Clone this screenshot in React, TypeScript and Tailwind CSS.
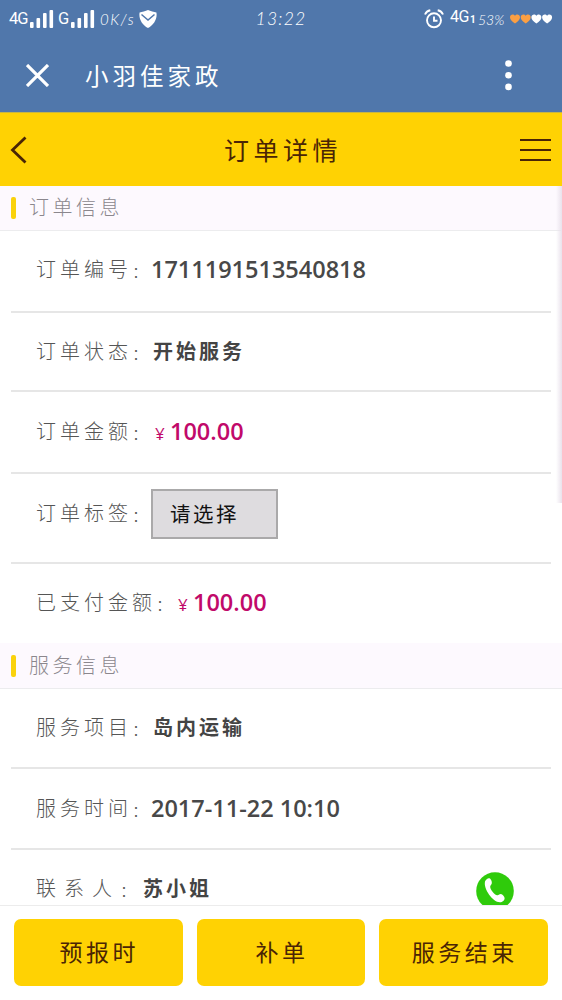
import type { ReactNode } from "react";
import { clsx } from "clsx";

const SIGNAL_BARS = [
  { x: 0, h: 6 },
  { x: 6.5, h: 10 },
  { x: 13, h: 15 },
  { x: 19.5, h: 18 },
];

const HEARTS = ["#fb9f43", "#fb9f43", "#ffffff", "#ffffff"];

const ACTIONS = ["预报时", "补单", "服务结束"];

function Signal() {
  return (
    <svg width="24" height="18" viewBox="0 0 24 18" fill="#fff" className="shrink-0">
      {SIGNAL_BARS.map((b) => (
        <rect key={b.x} x={b.x} y={18 - b.h} width="3.6" height={b.h} rx="1" />
      ))}
    </svg>
  );
}

function StatusBar() {
  return (
    <div className="grid h-[38px] grid-cols-3 text-white">
      <div className="flex items-center whitespace-nowrap pl-[9px] font-['Roboto',sans-serif] text-[16.5px]">
        <span className="w-[21px] tracking-[-1px]">4G</span>
        <Signal />
        <span className="ml-1 w-[13px]">G</span>
        <Signal />
        <span className="ml-[5px] w-[39px] font-['Lato',sans-serif] text-[15px] font-light italic tracking-[1.5px]">
          0K/s
        </span>
        <svg width="18" height="18" viewBox="0 0 18 18" className="shrink-0">
          <path d="M9 0C6.5 1.2 3 1.8.6 2.4-.6 8.5 3 15 9 18c6-3 9.6-9.5 8.4-15.6C15 1.8 11.5 1.2 9 0Z" fill="#fff" />
          <path d="m2.5 4.5 6.5 5.5 6.5-5.5" fill="none" stroke="#5077ab" strokeWidth="1.5" />
        </svg>
      </div>
      <div className="flex items-center justify-center font-['Lato',sans-serif] text-[17.5px] font-light italic tracking-[1.2px]">
        13:22
      </div>
      <div className="flex items-center justify-end whitespace-nowrap pr-[9px]">
        <svg width="20" height="20" viewBox="0 0 20 20" fill="none" stroke="#fff" strokeWidth="1.9" className="mr-[6px] shrink-0">
          <circle cx="10" cy="11.3" r="7" />
          <path d="M10 7.5v4.300h3.500M1 5.500Q2.500 2 6.300 1.300M19 5.500Q17.500 2 13.700 1.300" />
        </svg>
        <span className="mb-[5px] w-5 font-['Roboto',sans-serif] text-[16px] leading-none tracking-[-0.5px]">4G</span>
        <span className="w-[7px] font-['Roboto',sans-serif] text-[10px] font-bold">1</span>
        <span className="w-[33px] pl-px font-['Lato',sans-serif] text-[14px] font-light italic">53%</span>
        <svg width="43" height="10" viewBox="0 0 43 10" className="shrink-0">
          {HEARTS.map((color, i) => (
            <path
              key={i}
              d="M5 9.5C2 7.3 0 5.6 0 3.2 0 .4 3.5-.4 5 1.8 6.5-.4 10 .4 10 3.2 10 5.6 8 7.3 5 9.5Z"
              fill={color}
              transform={`translate(${i * 10.7} 0)`}
            />
          ))}
        </svg>
      </div>
    </div>
  );
}

function SectionTitle({ children, className }: { children: ReactNode; className?: string }) {
  return (
    <div className={clsx("flex items-center border-b border-[#ececee] bg-[#fdf9fe] pl-[11px]", className)}>
      <span className="h-[22px] w-[5px] rounded-[2px] bg-[#fad20c]" />
      <h2 className="ml-[13px] text-[20px] font-light leading-none tracking-[3.5px] text-[#8b878d]">
        {children}
      </h2>
    </div>
  );
}

interface RowProps {
  label: string;
  children: ReactNode;
  className?: string;
  labelClass?: string;
  action?: ReactNode;
}

function Row({ label, children, className, labelClass, action }: RowProps) {
  return (
    <div className={clsx("mx-[11px] flex items-center border-[#e6e6e6] pl-[25px]", className)}>
      <span
        className={clsx(
          "flex shrink-0 items-center whitespace-nowrap text-[20px] font-light leading-none text-[#555]",
          labelClass ?? "w-[115px] tracking-[4px]"
        )}
      >
        <span>{label}</span>
        <span className="pt-1 text-[16px] tracking-normal">：</span>
      </span>
      {children}
      {action}
    </div>
  );
}

function Value({ children }: { children: ReactNode }) {
  return <span className="text-[23.5px] font-semibold leading-none text-[#484848]">{children}</span>;
}

function TextValue({ children }: { children: ReactNode }) {
  return <span className="pl-[2px] text-[20px] font-bold leading-none tracking-[3px] text-[#444]">{children}</span>;
}

function Price({ amount }: { amount: string }) {
  return (
    <span className="flex items-center pl-1 leading-none text-[#c1096a]">
      <span className="w-[15px] pt-[3px] text-[17px] font-medium">¥</span>
      <span className="text-[23.5px] font-semibold">{amount}</span>
    </span>
  );
}

export default function App() {
  return (
    <div className="relative flex h-[1000px] w-[562px] flex-col overflow-hidden bg-white font-['Open_Sans','Noto_Sans_CJK_SC',sans-serif]">
      <header className="h-[112px] shrink-0 bg-[#5077ab]">
        <StatusBar />
        <div className="flex h-[74px] items-center pl-[26px] pr-[50px] text-white">
          <svg width="23" height="23" viewBox="0 0 23 23" stroke="#fff" strokeWidth="3.2">
            <path d="m1 1 21 21M22 1 1 22" />
          </svg>
          <h1 className="ml-[36px] pt-[3px] text-[23.5px] leading-none tracking-[4px]">小羽佳家政</h1>
          <svg width="7" height="32" viewBox="0 0 7 32" fill="#fff" className="ml-auto">
            <circle cx="3.5" cy="4.5" r="3.3" />
            <circle cx="3.5" cy="16.2" r="3.3" />
            <circle cx="3.5" cy="27.9" r="3.3" />
          </svg>
        </div>
      </header>

      <nav className="grid h-[74px] shrink-0 grid-cols-[1fr_auto_1fr] items-center border-t border-[#c8b642] bg-[#ffd203] pl-[10px] pr-[11px] text-[#4a2505]">
        <svg width="17" height="28" viewBox="0 0 17 28" fill="none" stroke="currentColor" strokeWidth="2.8">
          <path d="M15.5 1.5 2.5 14l13 12.500" />
        </svg>
        <h2 className="pl-[5px] pt-[2px] text-[25px] leading-none tracking-[4.5px]">订单详情</h2>
        <svg width="31" height="24" viewBox="0 0 31 24" stroke="currentColor" strokeWidth="2.2" className="justify-self-end">
          <path d="M0 2h31M0 12h31M0 22h31" />
        </svg>
      </nav>

      <main className="min-h-0 flex-1 overflow-hidden">
        <SectionTitle className="h-[45px]">订单信息</SectionTitle>
        <Row label="订单编号" className="h-[82px] border-b-2 pb-[3px]">
          <Value>1711191513540818</Value>
        </Row>
        <Row label="订单状态" className="h-[79px] border-b-2">
          <TextValue>开始服务</TextValue>
        </Row>
        <Row label="订单金额" className="h-[82px] border-b-2">
          <Price amount="100.00" />
        </Row>
        <Row label="订单标签" className="h-[90px] border-b-2 pb-[8px]">
          <button className="h-[50px] w-[127px] border-2 border-[#aaa9aa] bg-[#dedcdf] pl-[17px] text-left text-[20.5px] leading-none tracking-[2.5px] text-[#111]">
            请选择
          </button>
        </Row>
        <Row label="已支付金额" labelClass="w-[138px] tracking-[4px]" className="h-[79px] pb-[2px]">
          <Price amount="100.00" />
        </Row>
        <SectionTitle className="h-[46px]">服务信息</SectionTitle>
        <Row label="服务项目" className="h-20 border-b-2 pb-px">
          <TextValue>岛内运输</TextValue>
        </Row>
        <Row label="服务时间" className="h-[81px] border-b-2">
          <Value>2017-11-22 10:10</Value>
        </Row>
        <Row
          label="联系人"
          labelClass="w-[105px] tracking-[8px]"
          className="h-[80px] pb-[2px]"
          action={
            <svg width="38" height="38" viewBox="0 0 38 38" className="relative top-[2px] ml-auto mr-[37px]">
              <circle cx="19" cy="19" r="18.8" fill="#2fcb0b" />
              <path
                d="M9 9.5C10 7 12.5 5.5 14 6.6c1.500 1.200 2.200 4 1.700 5.200-.4 1.300-1.600 1.700-1.500 3.200.3 3 4.200 7.700 7 8.300 1.500.3 2.200-1.300 3.700-1.200 1.500.1 3.600 2.500 3.700 4.200.1 2.300-2.300 4-4.600 4C16.500 30.200 7.300 16.500 9 9.500Z"
                fill="#fff"
              />
            </svg>
          }
        >
          <TextValue>苏小姐</TextValue>
        </Row>
      </main>

      <footer className="grid h-[95px] shrink-0 grid-cols-3 gap-[14px] border-t border-[#ececec] bg-white px-[14px] pb-[14px] pt-[13px]">
        {ACTIONS.map((text) => (
          <button
            key={text}
            className="rounded-[7px] bg-[#ffd203] pl-[2px] text-[23px] leading-none tracking-[3.5px] text-[#4a2505]"
          >
            {text}
          </button>
        ))}
      </footer>

      {/* Edge shadow of the closed side menu */}
      <div className="absolute right-0 top-[186px] h-[317px] w-[6px] bg-gradient-to-r from-transparent to-[#e9e2ec]" />
    </div>
  );
}
